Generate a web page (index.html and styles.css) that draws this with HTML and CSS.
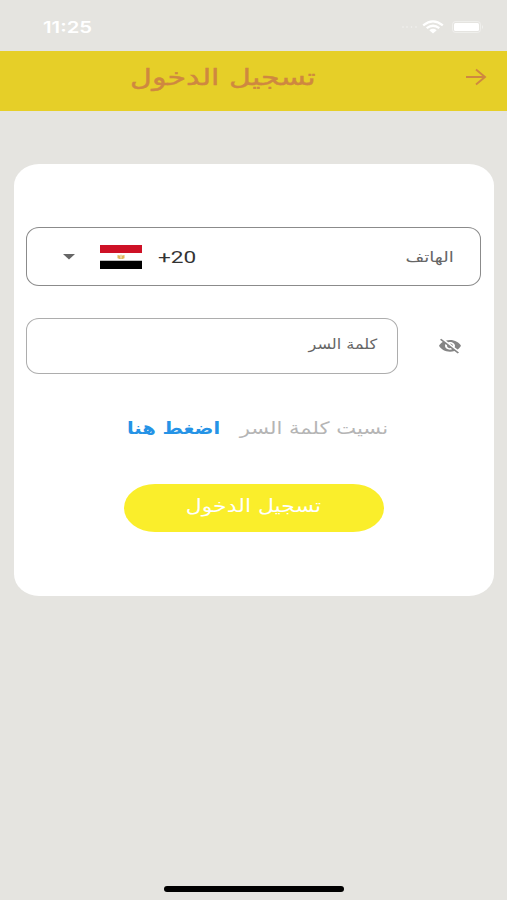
FILE: index.html
```
<!DOCTYPE html>
<html lang="ar" dir="rtl">
<head>
<meta charset="utf-8">
<meta name="viewport" content="width=device-width, initial-scale=1">
<title>تسجيل الدخول</title>
<link rel="stylesheet" href="styles.css">
</head>
<body>
<div class="status" dir="ltr">
  <span class="clock">11:25</span>
  <span class="status-icons">
    <svg class="signal" width="17" height="4" viewBox="0 0 17 4"><g fill="#fff" opacity=".55"><circle cx="2" cy="2" r=".8"/><circle cx="6" cy="2" r=".8"/><circle cx="10.500" cy="2" r=".8"/><circle cx="15" cy="2" r=".8"/></g></svg>
    <svg width="22" height="14" viewBox="0 0 22 14" fill="none" stroke="#fff" stroke-width="2.300"><path d="M1.200 5.300Q11 -2.600 20.800 5.300"/><path d="M4.700 8.100Q11 3.300 17.300 8.100"/><path d="M7.300 10.200Q11 7.300 14.700 10.200L11 13.500Z" fill="#fff" stroke="none"/></svg>
    <svg class="battery" width="32" height="12" viewBox="0 0 32 12"><rect x=".5" y=".5" width="28" height="11" rx="3" fill="none" stroke="#fff" opacity=".4"/><rect x="2" y="2" width="25" height="8" rx="1.500" fill="#fff"/><path d="M30 4q2 2 0 4z" fill="#fff" opacity=".5"/></svg>
  </span>
</div>
<header class="appbar">
  <svg class="back" width="22" height="18" viewBox="0 0 22 18" fill="none" stroke="#cf8840" stroke-width="1.900"><path d="M1 9H20M11 1.500L20 9L11 16.500"/></svg>
  <h1 class="title"><span>تسجيل الدخول</span></h1>
</header>
<main class="card">
  <div class="field phone">
    <span class="label phone-label"><span>الهاتف</span></span>
    <div class="country" dir="ltr">
      <svg class="caret" width="12" height="6" viewBox="0 0 12 6"><path d="M0 0H12L6 5.500Z" fill="#666"/></svg>
      <svg class="flag" width="42" height="24" viewBox="0 0 42 24"><path fill="#fff" d="M0 0h42v24H0z"/><path fill="#ce1126" d="M0 0h42v8H0z"/><path d="M0 15.700h42V24H0z"/><path d="M17.500 10l2.300.6L21 9.500l1.200 1.100 2.300-.6v3.300L22.500 14h-3l-2-.7z" fill="#e0b85c"/><path d="M21 10v3.500" stroke="#fff" stroke-width=".8"/></svg>
      <span class="code">+20</span>
    </div>
  </div>
  <div class="password-row">
    <svg class="eye" width="22" height="16" viewBox="1 2 22 20.500" preserveAspectRatio="none" fill="#858585"><path d="M12 7c2.760 0 5 2.240 5 5 0 .65-.13 1.260-.36 1.830l2.920 2.920c1.510-1.260 2.700-2.890 3.430-4.750-1.730-4.390-6-7.500-11-7.500-1.400 0-2.740.25-3.980.7l2.160 2.160C10.740 7.130 11.350 7 12 7zM2 4.270l2.280 2.280.46.46C3.080 8.300 1.780 10.020 1 12c1.730 4.390 6 7.500 11 7.500 1.550 0 3.030-.3 4.380-.84l.42.42L19.730 22 21 20.730 3.270 3 2 4.270zM7.530 9.800l1.550 1.550c-.05.21-.08.43-.08.650 0 1.660 1.340 3 3 3 .22 0 .44-.03.65-.08l1.550 1.550c-.67.33-1.410.53-2.200.53-2.760 0-5-2.240-5-5 0-.79.2-1.530.53-2.200zm4.310-.78l3.150 3.150.02-.16c0-1.660-1.340-3-3-3l-.17.01z"/></svg>
    <div class="field password"><span class="label password-label"><span>كلمة السر</span></span></div>
  </div>
  <p class="forgot"><span class="question"><span>نسيت كلمة السر</span></span><a class="link"><span>اضغط هنا</span></a></p>
  <button class="submit"><span>تسجيل الدخول</span></button>
</main>
<div class="home"></div>
</body>
</html>
```
FILE: styles.css
```
* { box-sizing: border-box; }
body { margin: 0; height: 900px; background: #e5e4e0; font-family: "DejaVu Sans", sans-serif; display: flex; flex-direction: column; overflow: hidden; }
svg { display: block; flex: none; }
span { white-space: nowrap; }
.status { height: 51px; flex: none; display: flex; justify-content: space-between; align-items: center; padding: 3px 23px 0 43px; }
.clock { font: 600 16px/20px Inter, sans-serif; color: #fff; transform: scaleX(1.27); transform-origin: left; }
.status-icons { display: flex; align-items: center; gap: 4px; }
.battery { margin-left: 4px; }
.appbar { height: 59.500px; flex: none; background: #e6cf28; display: flex; align-items: center; padding: 0 20px 8px; }
.back { margin-top: 1px; }
.title { margin: 0 149px 0 0; width: 186px; display: flex; justify-content: center; font-size: 23px; line-height: 30px; font-weight: 400; color: #cf8840; }
.title span { -webkit-text-stroke: .4px #cf8840; transform: scaleX(1.31); }
.card { width: 480px; height: 432px; flex: none; margin: 53.500px auto 0; background: #fff; border-radius: 25px / 22px; padding: 63px 13px 0 12px; }
.field { border: 1px solid #8b8b8b; border-radius: 13px / 12px; display: flex; align-items: center; }
.phone { height: 59px; justify-content: space-between; padding: 0 25px 0 36px; }
.label { font-size: 14px; line-height: 20px; color: #666; display: flex; justify-content: center; }
.label span { flex: none; }
.phone-label { width: 49px; }
.phone-label span { transform: scaleX(1.3); }
.country { display: flex; align-items: center; }
.flag { margin: 0 16px 0 25px; }
.code { font: 400 17px/20px Roboto, sans-serif; color: #333; width: 39px; transform: scaleX(1.33); transform-origin: left; }
.password-row { display: flex; align-items: center; margin-top: 32px; }
.eye { margin: 0 20px 0 41px; }
.password { width: 372px; height: 56px; margin-right: auto; border-color: #adadad; padding: 0 19px 4px; }
.password-label { width: 69px; }
.password-label span { transform: scaleX(1.15); }
.forgot { display: flex; gap: 19px; margin: 40px 92px 0 0; font-size: 17px; line-height: 28px; color: #b5b5b5; }
.question { width: 149px; display: flex; justify-content: center; }
.question span { transform: scaleX(1.24); }
.link { width: 94px; display: flex; justify-content: center; color: #2593e6; font-weight: 700; }
.link span { transform: scaleX(1.15); }
.submit { display: flex; justify-content: center; align-items: center; width: 260px; height: 48px; margin: 42px 97px 0 0; padding: 0 0 4px; border: 0; border-radius: 31px / 24px; background: #faee2b; color: #fff; font: 18px/24px "DejaVu Sans", sans-serif; }
.submit span { transform: scaleX(1.22); }
.home { width: 180px; height: 6px; flex: none; border-radius: 3px; background: #000; margin: auto auto 8px 163.500px; align-self: flex-end; }
```
